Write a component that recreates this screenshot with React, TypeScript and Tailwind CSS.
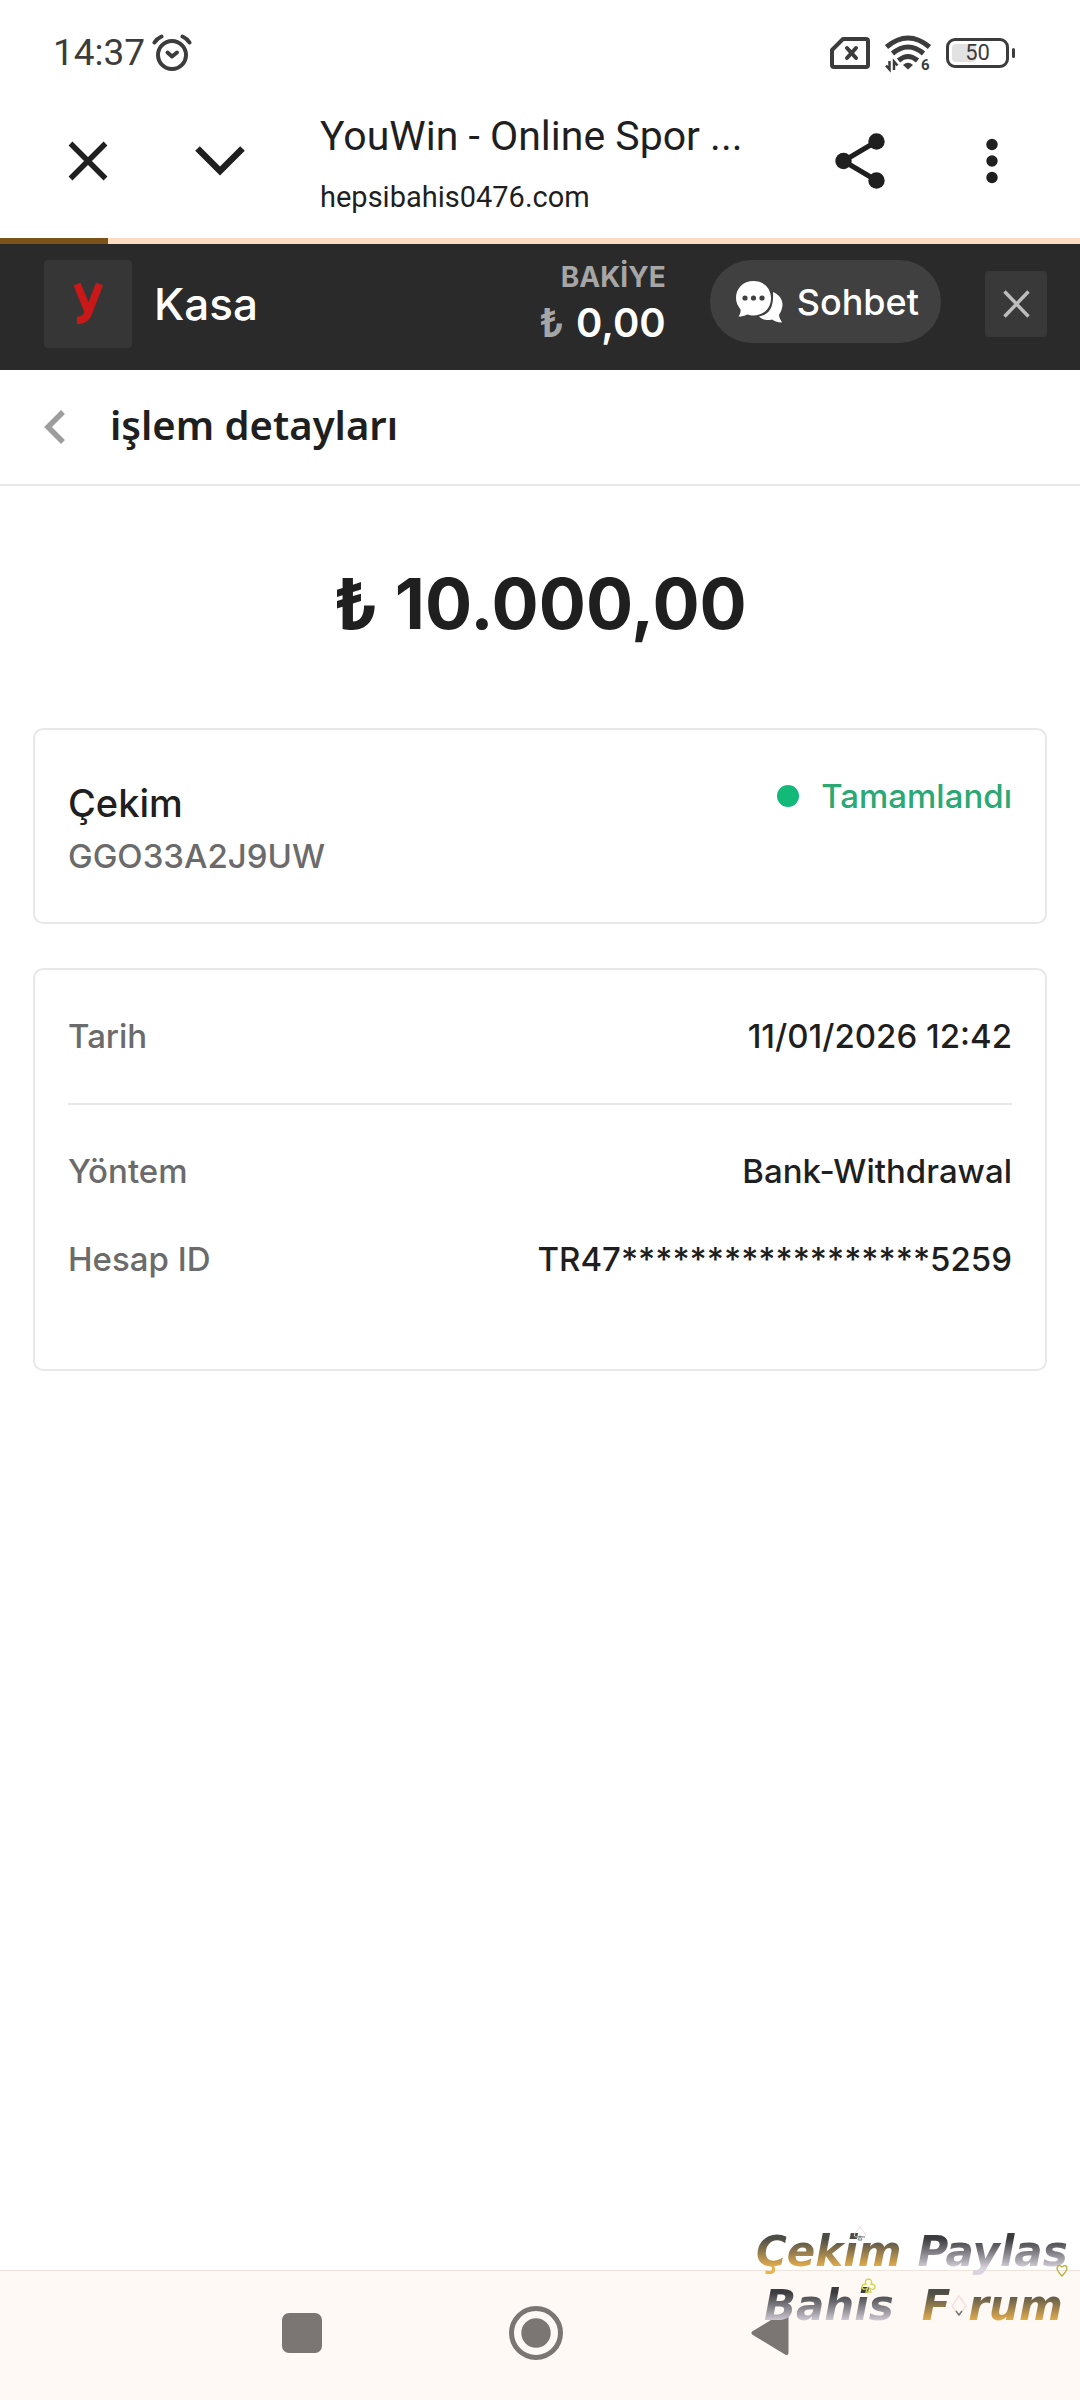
import type { ReactNode } from 'react';

const StatusBar = () => (
  <div className="flex h-[84px] items-center justify-between pt-[22px] pr-[65px] pl-[53px] text-[#3c3c3c]">
    <div className="flex items-center gap-[7px]">
      <span className="font-[Roboto,sans-serif] text-[37px] leading-[44px]">14:37</span>
      <svg width="40" height="38" viewBox="0 0 40 38" fill="none" stroke="currentColor" strokeLinecap="round" aria-label="Alarm">
        <circle cx="20" cy="21" r="14" strokeWidth="4" />
        <path d="M2.500 8.500Q5 4.500 9.500 2.500M37.500 8.500Q35 4.500 30.500 2.500" strokeWidth="4" />
        <path d="M15.500 18.500L20 22.500L25 18.500" strokeWidth="4" strokeLinejoin="round" />
      </svg>
    </div>
    <div className="flex items-center gap-[15px]">
      <svg width="40" height="32" viewBox="0 0 40 32" fill="none" stroke="currentColor" strokeWidth="4" strokeLinejoin="round" aria-label="SIM yok">
        <path d="M13 2H36Q38 2 38 4V28Q38 30 36 30H4Q2 30 2 28V13Z" />
        <path d="M17 11L26 21M26 11L17 21" strokeLinecap="round" />
      </svg>
      <svg width="46" height="36" viewBox="0 0 46 36" fill="none" stroke="currentColor" strokeWidth="5" className="overflow-visible" aria-label="Wi-Fi">
        <path d="M1.500 12Q23 -6 44.500 12" />
        <path d="M7.500 18.500Q23 5.500 38.500 18.500" />
        <path d="M13.500 25.500Q23 17.500 32.500 25.500" />
        <path d="M18 30Q23 25.500 28 30L23 34.500Z" fill="currentColor" stroke="none" />
        <path d="M4.500 26V34.500L1 30.500M9 35V26.500L12.500 30.500" strokeWidth="2.500" />
        <text x="36" y="35" fill="currentColor" stroke="none" className="font-[Roboto,sans-serif] text-[15px] font-bold">6</text>
      </svg>
      <div className="flex items-center gap-[3px]">
        <div className="relative flex h-[30px] w-[63px] items-center justify-center rounded-[9px] border-[3px] border-current">
          <div className="absolute inset-y-[3px] left-[3px] w-6 rounded-sm bg-[#e2e2e2]" />
          <span className="relative font-[Roboto,sans-serif] text-[22px] leading-6">50</span>
        </div>
        <div className="h-[10px] w-[3px] rounded-full bg-current" />
      </div>
    </div>
  </div>
);

const BrowserBar = () => (
  <div className="flex h-[154px] items-center text-[#1f1f1f]">
    <button aria-label="Kapat" className="ml-[58px] flex size-[60px] items-center justify-center">
      <svg width="40" height="40" viewBox="0 0 40 40" stroke="currentColor" strokeWidth="5.500">
        <path d="M2.500 2.500L37.500 37.500M37.500 2.500L2.500 37.500" />
      </svg>
    </button>
    <button aria-label="Küçült" className="ml-[72px] flex size-[60px] items-center justify-center">
      <svg width="50" height="30" viewBox="0 0 50 30" fill="none" stroke="currentColor" strokeWidth="6.500">
        <path d="M2.500 2.500L25 25L47.500 2.500" />
      </svg>
    </button>
    <div className="ml-[70px] min-w-0 flex-1 pt-3 font-[Roboto,sans-serif]">
      <div className="truncate text-[41px] leading-[60px]">YouWin - Online Spor ...</div>
      <div className="text-[29px] leading-[62px]">hepsibahis0476.com</div>
    </div>
    <button aria-label="Paylaş" className="flex size-[60px] items-center justify-center">
      <svg width="50" height="56" viewBox="0 0 50 56" fill="currentColor" stroke="currentColor">
        <path d="M41.500 8.500L8.500 28L41.500 47.500" fill="none" strokeWidth="5" />
        <g stroke="none">
          <circle cx="41.500" cy="8.500" r="8.200" />
          <circle cx="8.500" cy="28" r="8.200" />
          <circle cx="41.500" cy="47.500" r="8.200" />
        </g>
      </svg>
    </button>
    <button aria-label="Menü" className="mr-[58px] ml-[72px] flex size-[60px] items-center justify-center">
      <svg width="12" height="46" viewBox="0 0 12 46" fill="currentColor">
        <circle cx="6" cy="6.500" r="5.700" />
        <circle cx="6" cy="23" r="5.700" />
        <circle cx="6" cy="39.500" r="5.700" />
      </svg>
    </button>
  </div>
);

const CashierHeader = () => (
  <header className="flex items-start bg-[#2a2a2a] pt-4 pr-[33px] pb-[18px] pl-11 text-white">
    <div className="flex size-[88px] items-center justify-center rounded bg-[#363636]">
      <svg width="30" height="42" viewBox="0 0 30 42" fill="none" stroke="#c91818" aria-label="YouWin">
        <path d="M4 1L15 28M26.500 1L16.500 27Q13.500 37.500 4 37.500" strokeWidth="7.500" />
      </svg>
    </div>
    <h1 className="ml-[22px] text-[44px] leading-[88px] font-medium">Kasa</h1>
    <div className="ml-auto flex flex-col items-end">
      <span className="text-[28px] leading-[34px] font-bold text-[#a6a6a6]">BAKİYE</span>
      <div className="flex gap-3 text-[40px] leading-[58px] font-semibold">
        <span className="text-[#a6a6a6]">₺</span>
        <span>0,00</span>
      </div>
    </div>
    <button className="ml-11 flex h-[83px] items-center gap-[13px] rounded-full bg-[#404040] pr-[22px] pl-[26px] text-[36px] font-medium">
      <svg width="48" height="42" viewBox="0 0 48 42" fill="currentColor">
        <path d="M37 11C44 14 48 20 46 27C45.500 30 44 32 43 34C43 37 45 39 46 41.500C41 41.500 38 40 36 38.500C31 40 26 38.500 23 35.500C33 34 38 27 37 11Z" />
        <path d="M17.500 0C28 0 35 7.500 35 17C35 27 28 34.500 17.500 34.500C15 34.500 13 34 11 33.500C8.500 35 6 35.500 2.500 35.500C4 33.500 5 31 4.500 28.500C2 25 0 21.500 0 17C0 7.500 7 0 17.500 0Z" />
        <g fill="#404040">
          <circle cx="9" cy="17" r="2.600" />
          <circle cx="17.500" cy="17" r="2.600" />
          <circle cx="26" cy="17" r="2.600" />
        </g>
      </svg>
      Sohbet
    </button>
    <button aria-label="Kasayı kapat" className="mt-[11px] ml-11 flex h-[66px] w-[62px] items-center justify-center rounded bg-[#393939] text-[#bdbdbd]">
      <svg width="27" height="28" viewBox="0 0 27 28" stroke="currentColor" strokeWidth="3.500">
        <path d="M1.500 1.500L25.500 26.500M25.500 1.500L1.500 26.500" />
      </svg>
    </button>
  </header>
);

const Row = ({ label, value }: { label: string; value: string }) => (
  <div className="flex justify-between text-[33px] leading-[48px] font-medium">
    <dt className="text-[#6b6b6b]">{label}</dt>
    <dd>{value}</dd>
  </div>
);

const Card = ({ className, children }: { className: string; children: ReactNode }) => (
  <section className={`mx-[33px] rounded-[10px] border-2 border-[#e8e8e8] px-[33px] ${className}`}>{children}</section>
);

const NavBar = () => (
  <nav className="flex h-[130px] items-center justify-center gap-[182px] border-t border-[#efe4db] bg-[#fef9f5] pr-2 pb-[6px] text-[#7b7673]">
    <button aria-label="Son uygulamalar" className="flex w-[50px] justify-center">
      <span className="size-10 rounded-[7px] bg-current" />
    </button>
    <button aria-label="Ana ekran" className="flex w-[54px] justify-center">
      <svg width="54" height="54" viewBox="0 0 54 54" fill="currentColor">
        <circle cx="27" cy="27" r="24.500" fill="none" stroke="currentColor" strokeWidth="5" />
        <circle cx="27" cy="27" r="14.700" />
      </svg>
    </button>
    <button aria-label="Geri" className="flex w-[50px] justify-center">
      <svg width="38" height="46" viewBox="0 0 38 46" fill="currentColor" stroke="currentColor" strokeWidth="4" strokeLinejoin="round">
        <path d="M2.500 23L35.500 3V43Z" />
      </svg>
    </button>
  </nav>
);

const gold = 'bg-linear-to-b from-[#4c4d45] from-25% to-[#eeb348] to-80% bg-clip-text text-transparent';
const silver = 'bg-linear-to-b from-[#3c3c3f] from-25% to-[#d9d3de] to-80% bg-clip-text text-transparent';

const Watermark = () => (
  <div className="pointer-events-none absolute right-0 bottom-[67px] w-[324px] font-['DejaVu_Sans',sans-serif] text-[42px] leading-[54px] font-bold italic">
    <div className="flex gap-4">
      <span className={gold}>Çekim</span>
      <span className={silver}>Paylas</span>
    </div>
    <div className="flex items-center pl-2">
      <span className={silver}>Bahis</span>
      <span className={`ml-7 ${gold}`}>F</span>
      <svg width="18" height="24" viewBox="0 0 18 24" fill="none" stroke="#f6dfdf" strokeWidth="1.500">
        <path d="M9 2L16 12L9 21L2 12Z" />
        <path d="M6 17L9 21L12 17" stroke="#777777" />
      </svg>
      <span className={gold}>rum</span>
    </div>
    <svg className="absolute top-0 left-[97px]" width="14" height="16" viewBox="0 0 14 16" fill="none" stroke="#f8dfe0">
      <path d="M7 1Q8 5 12 8Q14 12 10 12L7 11L4 12Q0 12 2 8Q6 5 7 1Z" />
      <path d="M2 12H5L7 11L9 12H12M5 15H9L7 11Z" stroke="#708084" />
    </svg>
    <svg className="absolute top-[53px] left-[105px]" width="15" height="16" viewBox="0 0 15 16" fill="none" stroke="#d4d34b" strokeWidth="1.300">
      <path d="M6.500 10Q2 13 1 9Q1 6 5 6Q3 2 7.500 1Q12 2 10 6Q14 6 14 9Q13 13 8.500 10L10 14H5Z" />
    </svg>
    <svg className="absolute top-[39px] right-3" width="12" height="13" viewBox="0 0 12 13" fill="none" stroke="#b9ae3c" strokeWidth="1.300">
      <path d="M6 12Q1 7 1 4Q2 0 6 3Q10 0 11 4Q11 7 6 12Z" />
    </svg>
  </div>
);

const App = () => {
  return (
    <div className="relative flex min-h-screen flex-col bg-white font-[Inter,sans-serif] text-[#1f1f1f]">
      <StatusBar />
      <BrowserBar />
      <div className="h-[6px] bg-[#fcdcc2]">
        <div className="h-full w-1/10 bg-[#7b5319]" />
      </div>
      <CashierHeader />

      <main className="flex-1">
        <div className="flex h-[116px] items-center border-b-2 border-[#e8e8e8] pl-11">
          <button aria-label="Geri dön" className="text-[#9e9e9e]">
            <svg width="22" height="34" viewBox="0 0 22 34" fill="none" stroke="currentColor" strokeWidth="5.500">
              <path d="M19 2L4 17L19 32" />
            </svg>
          </button>
          <h2 className="ml-11 pb-1 font-['Noto_Sans',sans-serif] text-[40px] leading-[52px] font-semibold">işlem detayları</h2>
        </div>

        <p className="pt-[68px] pb-[74px] text-center text-[70px] leading-[100px] font-bold">₺ 10.000,00</p>

        <Card className="flex items-start justify-between pt-12 pb-[38px]">
          <div>
            <h3 className="text-[38px] leading-[50px] font-medium">Çekim</h3>
            <p className="text-[33px] leading-[56px] font-medium text-[#6b6b6b]">GGO33A2J9UW</p>
          </div>
          <div className="flex items-center gap-[22px] text-[33px] leading-9 font-medium text-[#2ba873]">
            <span className="size-[22px] rounded-full bg-[#13b979]" />
            Tamamlandı
          </div>
        </Card>

        <Card className="mt-11 pt-[42px] pb-[86px]">
          <dl>
            <Row label="Tarih" value="11/01/2026 12:42" />
            <div className="mt-[43px] flex flex-col gap-10 border-t-2 border-[#e8e8e8] pt-[42px]">
              <Row label="Yöntem" value="Bank-Withdrawal" />
              <Row label="Hesap ID" value="TR47******************5259" />
            </div>
          </dl>
        </Card>
      </main>

      <NavBar />
      <Watermark />
    </div>
  );
};

export default App;
